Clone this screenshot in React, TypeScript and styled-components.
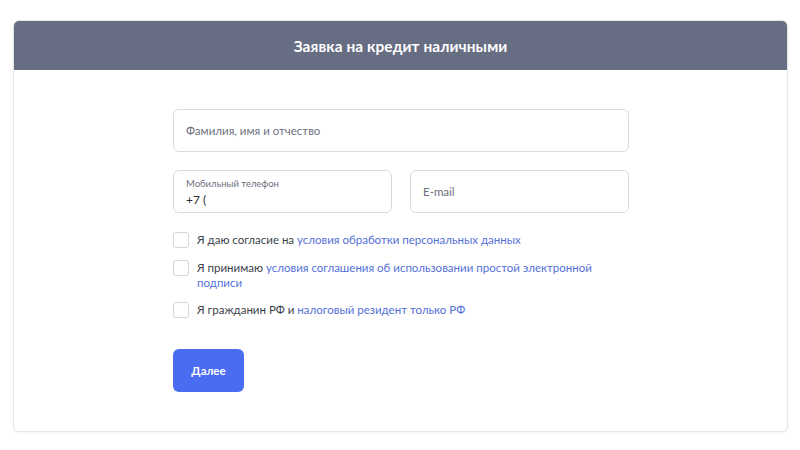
import React from "react";
import styled, { createGlobalStyle } from "styled-components";

const Global = createGlobalStyle`
  html, body { margin: 0; padding: 0; background: #ffffff; }
  body { font-family: "Lato", "Open Sans", sans-serif; }
  * { box-sizing: border-box; }
`;

const Page = styled.div`
  width: 800px;
  height: 450px;
  padding: 20px 12px 0 13px;
`;

const Card = styled.div`
  width: 775px;
  height: 412px;
  border: 1px solid #e6e6e9;
  border-radius: 6px;
  box-shadow: 0 1px 3px rgba(0, 0, 0, 0.06);
  overflow: hidden;
  background: #fff;
  display: flex;
  flex-direction: column;
`;

const Header = styled.div`
  flex: none;
  height: 49px;
  background: #676d82;
  color: #fff;
  display: flex;
  align-items: center;
  justify-content: center;
  font-size: 15.4px;
  font-weight: 700;
  letter-spacing: 0.1px;
`;

const Form = styled.div`
  width: 456px;
  margin: 39px 0 0 159px;
  display: flex;
  flex-direction: column;
`;

const Field = styled.div<{ $grow?: boolean }>`
  flex: ${(p) => (p.$grow ? "1 1 0" : "none")};
  height: 43px;
  border: 1px solid #d9dbe0;
  border-radius: 6px;
  padding: 0 12px;
  display: flex;
  flex-direction: column;
  justify-content: center;
`;

const Placeholder = styled.div`
  font-size: 11.5px;
  color: #6e7180;
`;

const SmallLabel = styled.div`
  font-size: 9.5px;
  color: #6e7180;
  margin-top: 1px;
`;

const Value = styled.div`
  font-size: 12px;
  color: #2b2d33;
  margin-top: 3px;
`;

const Row = styled.div`
  display: flex;
  gap: 18px;
  margin-top: 18px;
`;

const Checks = styled.div`
  margin-top: 19px;
  display: flex;
  flex-direction: column;
  gap: 12px;
`;

const CheckRow = styled.label`
  display: flex;
  align-items: flex-start;
  gap: 8px;
  font-size: 11.5px;
  line-height: 15px;
  color: #3c3f4a;
`;

const Box = styled.span`
  flex: none;
  width: 16px;
  height: 16px;
  border: 1px solid #d4d6dc;
  border-radius: 3px;
  background: #fff;
`;

const Text = styled.p`
  margin: 0;
  max-width: 420px;
`;

const Link = styled.a`
  color: #5470d8;
  text-decoration: none;
`;

const Button = styled.button`
  margin-top: 31px;
  width: 71px;
  height: 43px;
  border: none;
  border-radius: 6px;
  background: #4a6cf0;
  color: #fff;
  font-family: inherit;
  font-size: 11.5px;
  font-weight: 700;
  cursor: pointer;
`;

export default function App() {
  return (
    <Page>
      <Global />
      <Card>
        <Header>Заявка на кредит наличными</Header>
        <Form>
          <Field>
            <Placeholder>Фамилия, имя и отчество</Placeholder>
          </Field>
          <Row>
            <Field $grow>
              <SmallLabel>Мобильный телефон</SmallLabel>
              <Value>+7 (</Value>
            </Field>
            <Field $grow>
              <Placeholder>E-mail</Placeholder>
            </Field>
          </Row>
          <Checks>
            <CheckRow>
              <Box />
              <Text>
                Я даю согласие на <Link>условия обработки персональных данных</Link>
              </Text>
            </CheckRow>
            <CheckRow>
              <Box />
              <Text>
                Я принимаю{" "}
                <Link>условия соглашения об использовании простой электронной подписи</Link>
              </Text>
            </CheckRow>
            <CheckRow>
              <Box />
              <Text>
                Я гражданин РФ и <Link>налоговый резидент только РФ</Link>
              </Text>
            </CheckRow>
          </Checks>
          <Button>Далее</Button>
        </Form>
      </Card>
    </Page>
  );
}
